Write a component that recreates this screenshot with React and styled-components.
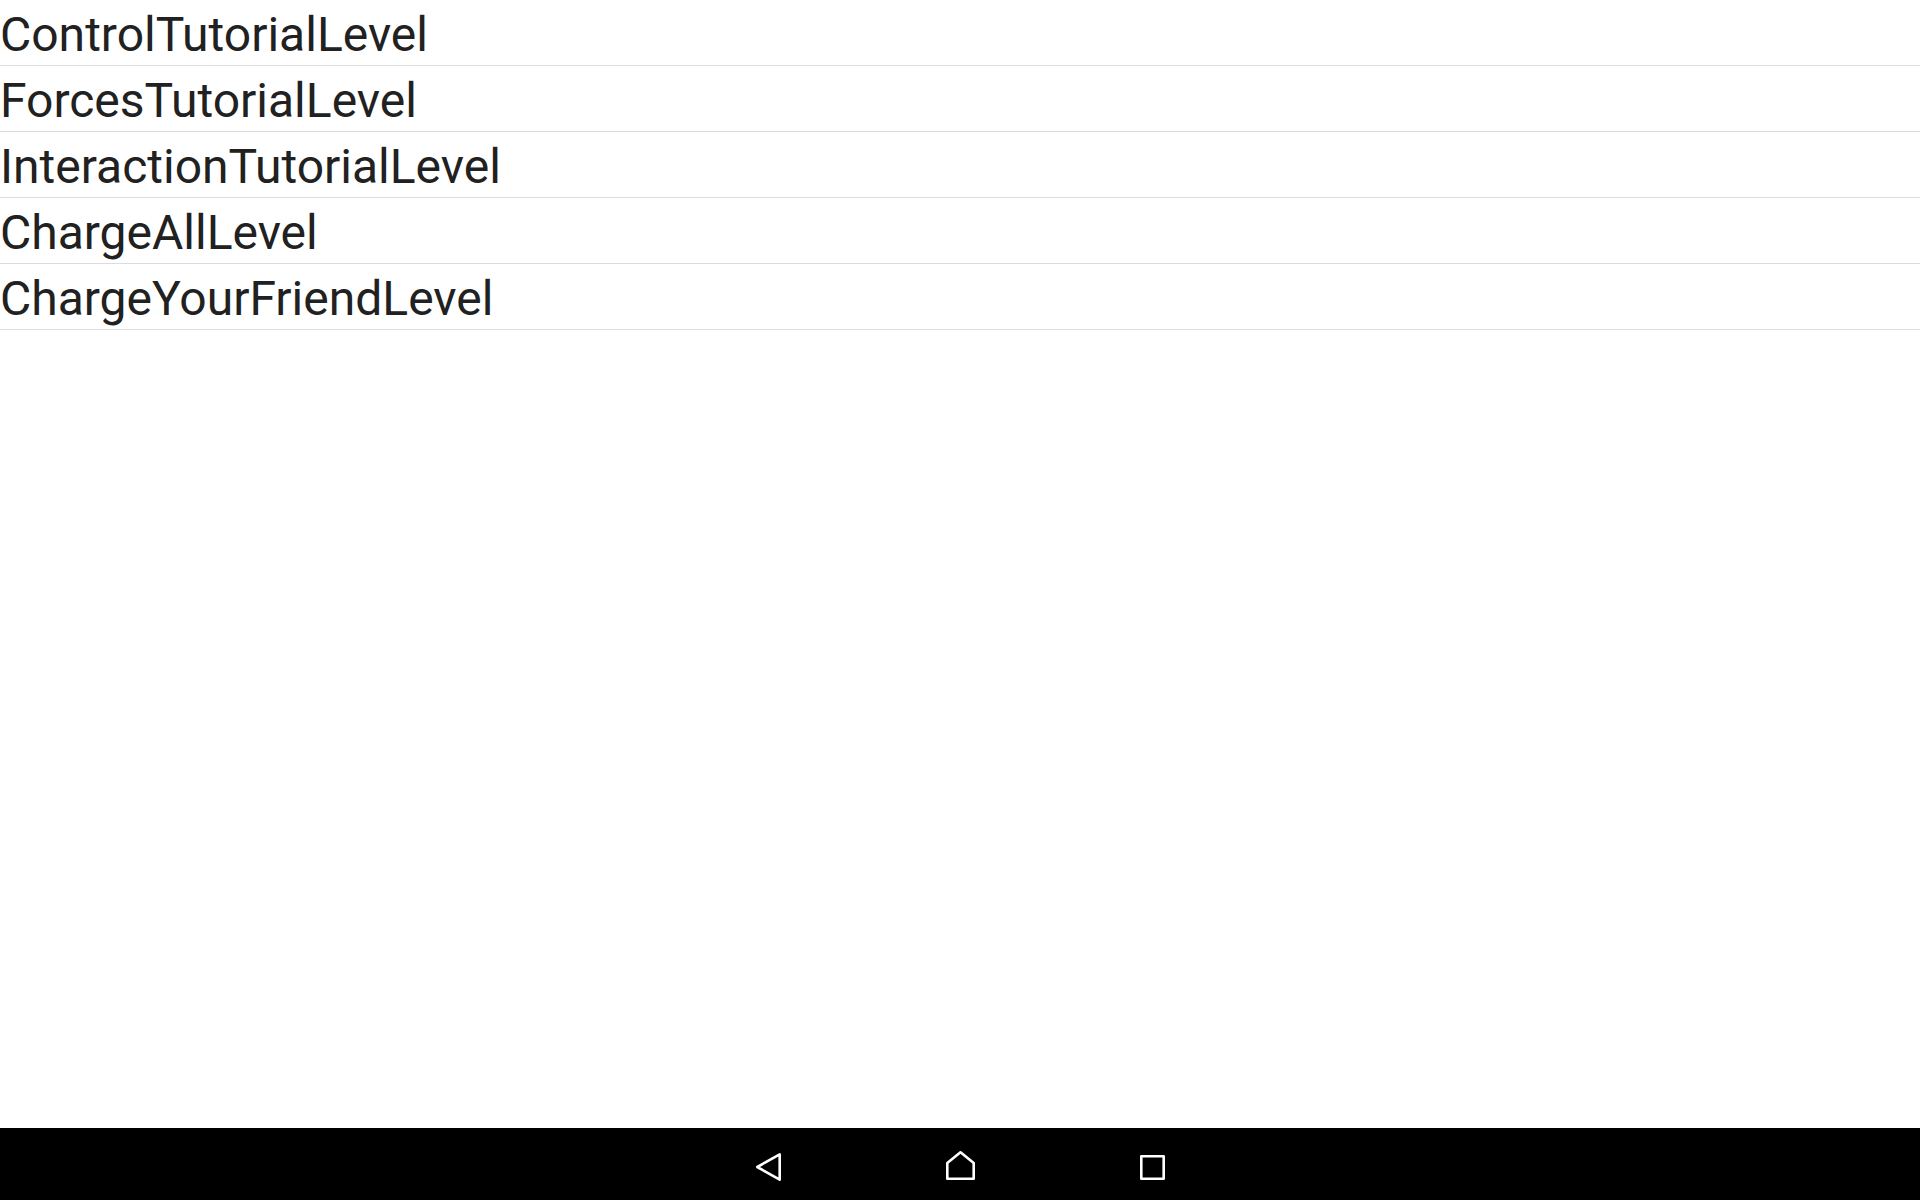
import styled, { createGlobalStyle } from 'styled-components';

const levels = [
  'ControlTutorialLevel',
  'ForcesTutorialLevel',
  'InteractionTutorialLevel',
  'ChargeAllLevel',
  'ChargeYourFriendLevel',
];

const GlobalStyle = createGlobalStyle`
  html, body {
    margin: 0;
    padding: 0;
    background: #ffffff;
  }
  body {
    font-family: Roboto, "Noto Sans", sans-serif;
  }
`;

const Screen = styled.div`
  width: 1920px;
  height: 1200px;
  display: flex;
  flex-direction: column;
  overflow: hidden;
`;

const LevelList = styled.ul`
  flex: 1;
  margin: 0;
  padding: 0;
  list-style: none;
`;

const LevelRow = styled.li`
  height: 66px;
  box-sizing: border-box;
  padding-top: 4px;
  display: flex;
  align-items: center;
  border-bottom: 1px solid #dcdcdc;
  font-size: 48px;
  color: #212121;
  white-space: nowrap;
`;

const NavBar = styled.div`
  height: 72px;
  box-sizing: border-box;
  padding-top: 4px;
  background: #000000;
  display: flex;
  justify-content: center;
  align-items: center;
  gap: 132px;
`;

const NavButton = styled.button`
  width: 60px;
  height: 60px;
  padding: 0;
  border: 0;
  background: none;
  display: flex;
  align-items: center;
  justify-content: center;
`;

const App = () => {
  return (
    <Screen>
      <GlobalStyle />
      <LevelList>
        {levels.map((name) => (
          <LevelRow key={name}>{name}</LevelRow>
        ))}
      </LevelList>
      <NavBar>
        <NavButton aria-label="back">
          <svg width="40" height="40" viewBox="0 0 40 40">
            <path d="M31.7 8.3 L31.7 33.7 L9.3 21 Z" fill="none" stroke="#fff" strokeWidth="2.6" strokeLinejoin="round" />
          </svg>
        </NavButton>
        <NavButton aria-label="home">
          <svg width="40" height="40" viewBox="0 0 40 40">
            <path d="M7.3 32.7 L7.3 17 L20.5 6.3 L33.7 17 L33.7 32.7 Z" fill="none" stroke="#fff" strokeWidth="2.6" strokeLinejoin="round" />
          </svg>
        </NavButton>
        <NavButton aria-label="recents">
          <svg width="40" height="40" viewBox="0 0 40 40">
            <rect x="9.3" y="10.3" width="22.4" height="22.4" fill="none" stroke="#fff" strokeWidth="2.6" strokeLinejoin="round" />
          </svg>
        </NavButton>
      </NavBar>
    </Screen>
  );
};

export default App;
